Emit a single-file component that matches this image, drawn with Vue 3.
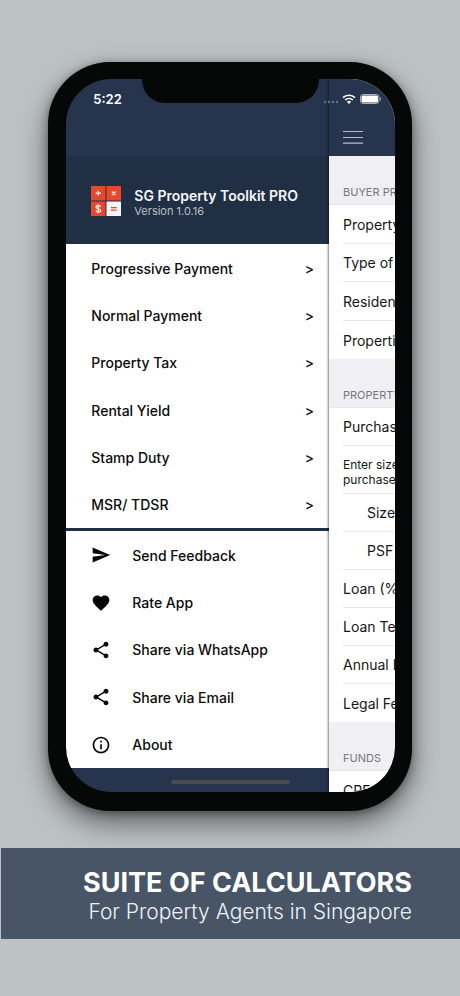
<script setup>
const pages = ['Progressive Payment', 'Normal Payment', 'Property Tax', 'Rental Yield', 'Stamp Duty', 'MSR/ TDSR']

const sharePath =
  'M18 16.08c-.76 0-1.44.3-1.96.77L8.91 12.7c.05-.23.09-.46.09-.7s-.04-.47-.09-.7l7.05-4.11c.54.5 1.25.81 2.04.81 1.66 0 3-1.34 3-3s-1.34-3-3-3-3 1.34-3 3c0 .24.04.47.09.7L8.04 9.81C7.5 9.31 6.79 9 6 9c-1.66 0-3 1.34-3 3s1.34 3 3 3c.79 0 1.5-.31 2.04-.81l7.12 4.16c-.05.21-.08.43-.08.65 0 1.61 1.31 2.92 2.92 2.92s2.92-1.31 2.92-2.92-1.31-2.92-2.92-2.92z'

const actions = [
  { label: 'Send Feedback', path: 'M2.01 21L23 12 2.01 3 2 10l15 2-15 2z' },
  {
    label: 'Rate App',
    path: 'M12 21.35l-1.45-1.32C5.4 15.36 2 12.28 2 8.5 2 5.42 4.42 3 7.5 3c1.74 0 3.41.81 4.5 2.09C13.09 3.81 14.76 3 16.5 3 19.58 3 22 5.42 22 8.5c0 3.78-3.4 6.86-8.55 11.54L12 21.35z',
  },
  { label: 'Share via WhatsApp', path: sharePath },
  { label: 'Share via Email', path: sharePath },
  {
    label: 'About',
    path: 'M11 17h2v-6h-2v6zm1-15C6.48 2 2 6.48 2 12s4.48 10 10 10 10-4.48 10-10S17.52 2 12 2zm0 18c-4.41 0-8-3.59-8-8s3.59-8 8-8 8 3.59 8 8-3.59 8-8 8zM11 9h2V7h-2v2z',
  },
]

const sections = [
  { title: 'BUYER PROFILE', rows: ['Property Count', 'Type of Buyer', 'Residency', 'Properties Owned'] },
  {
    title: 'PROPERTY DETAILS',
    rows: [
      'Purchase Price',
      { note: ['Enter size and PSF or', 'purchase price'] },
      { indent: 'Size' },
      { indent: 'PSF' },
      'Loan (%)',
      'Loan Tenure',
      'Annual Income',
      'Legal Fees',
    ],
  },
  { title: 'FUNDS', rows: ['CPF Balance'] },
]
</script>

<template>
  <div class="page">
    <div class="phone">
      <div class="screen">
        <aside class="drawer">
          <div class="drawer-top"></div>
          <header class="brand">
            <svg class="logo" viewBox="0 0 31 31" aria-hidden="true">
              <path class="tile" d="M0 0h15v15H0zM16 0h15v15H16zM0 16h15v15H0z" />
              <path class="tile-light" d="M16 16h15v15H16z" />
              <path class="mark" d="M7.5 4.8v5.4M4.8 7.5h5.4M21.6 5.6l3.8 3.8M25.4 5.6l-3.8 3.8" />
              <path class="mark" d="M9.9 21.6c-.5-1-1.3-1.4-2.4-1.4-1.4 0-2.3.6-2.3 1.6 0 2.4 4.8 1.1 4.8 3.5 0 1-1 1.6-2.4 1.6-1.3 0-2.2-.5-2.6-1.5M7.5 18.800v9.400" />
              <path class="mark-red" d="M20.500 22.300h6M20.500 25h6" />
            </svg>
            <div class="brand-text">
              <h1>SG Property Toolkit PRO</h1>
              <p>Version 1.0.16</p>
            </div>
          </header>
          <nav class="pages">
            <a v-for="page in pages" :key="page" href="#">
              <span>{{ page }}</span><span>&gt;</span>
            </a>
          </nav>
          <nav class="actions">
            <a v-for="action in actions" :key="action.label" href="#">
              <svg viewBox="0 0 24 24" aria-hidden="true"><path :d="action.path" /></svg>
              <span>{{ action.label }}</span>
            </a>
          </nav>
          <footer class="drawer-bottom"></footer>
        </aside>

        <main class="content">
          <div class="toolbar">
            <button type="button" aria-label="Menu">
              <svg viewBox="0 0 20 14" aria-hidden="true"><path d="M0 1.500h20M0 7.500h20M0 13.200h20" /></svg>
            </button>
          </div>
          <section v-for="section in sections" :key="section.title">
            <h2>{{ section.title }}</h2>
            <ul>
              <li
                v-for="(row, i) in section.rows"
                :key="i"
                :class="{ note: row.note, indent: row.indent }"
              >
                <template v-if="row.note">
                  <span v-for="line in row.note" :key="line">{{ line }}</span>
                </template>
                <span v-else>{{ row.indent || row }}</span>
              </li>
            </ul>
          </section>
        </main>

        <div class="status">
          <span class="time">5:22</span>
          <svg class="dots" viewBox="0 0 16 4" aria-hidden="true">
            <circle cx="2" cy="2" r="1.200" /><circle cx="6" cy="2" r="1.200" />
            <circle cx="10" cy="2" r="1.200" /><circle cx="14" cy="2" r="1.200" />
          </svg>
          <svg class="wifi" viewBox="0 0 14 10" aria-hidden="true">
            <path d="M1 3.700a8.600 8.600 0 0 1 12 0M3.200 6a5.500 5.500 0 0 1 7.600 0" />
            <path class="fill" d="M4.900 7.700a3 3 0 0 1 4.200 0L7 9.900z" />
          </svg>
          <svg class="battery" viewBox="0 0 22 10" aria-hidden="true">
            <rect class="shell" x=".5" y=".5" width="18.500" height="9" rx="2.500" />
            <rect class="level" x="1.500" y="1.500" width="16.500" height="7" rx="1.500" />
            <path class="tip" d="M20 3.300c1.500.5 1.500 2.900 0 3.400z" />
          </svg>
        </div>
        <div class="notch"></div>
        <div class="home"></div>
      </div>
    </div>

    <div class="banner">
      <strong>SUITE OF CALCULATORS</strong>
      <span>For Property Agents in Singapore</span>
    </div>
  </div>
</template>

<style>
body {
  margin: 0;
  background: #bdc2c5;
}
</style>

<style scoped>
.page {
  box-sizing: border-box;
  min-height: 100vh;
  padding-top: 62px;
  overflow: hidden;
  background: #bdc2c5;
  font-family: Inter, 'Liberation Sans', sans-serif;
}
h1, h2, p, ul {
  margin: 0;
  padding: 0;
  font-weight: 400;
}
a {
  color: inherit;
  text-decoration: none;
}
.phone {
  box-sizing: border-box;
  width: 79%;
  aspect-ratio: 363 / 748;
  margin: 0 auto;
  padding: 17px 17px 19px 18px;
  border-radius: 62px;
  background: #060707;
  box-shadow: 0 12px 28px rgba(0, 0, 0, 0.5), 0 2px 8px rgba(0, 0, 0, 0.35);
}
.screen {
  position: relative;
  display: flex;
  height: 100%;
  overflow: hidden;
  border-radius: 45px;
}
.drawer {
  display: flex;
  flex: 0 0 80%;
  flex-direction: column;
}
.drawer-top {
  height: 77px;
  background: #26354d;
}
.brand {
  display: flex;
  align-items: center;
  box-sizing: border-box;
  height: 88px;
  gap: 13px;
  padding: 2px 0 0 25px;
  background: #202f43;
  color: #f4f6f8;
  white-space: nowrap;
}
.brand-text {
  padding-top: 2px;
}
.brand h1 {
  font-size: 14px;
  font-weight: 600;
  line-height: 17px;
}
.brand p {
  color: #b9c0c9;
  font-size: 11px;
  line-height: 14px;
}
.logo {
  width: 30px;
  height: 30px;
}
.tile { fill: #e5482d; }
.tile-light { fill: #f5f3f5; }
.mark {
  fill: none;
  stroke: #fbe3da;
  stroke-width: 1.400;
}
.mark-red {
  stroke: #e5482d;
  stroke-width: 1.300;
}
.pages,
.actions {
  display: flex;
  flex-direction: column;
  background: #fff;
  color: #0b0b0b;
  font-size: 14px;
  font-weight: 500;
}
.pages {
  flex: 6 1 0;
}
.actions {
  flex: 5 1 0;
  border-top: 3px solid #202f43;
}
.pages a,
.actions a {
  display: flex;
  flex: 1;
  align-items: center;
  padding: 1px 15px 0 25px;
}
.pages a {
  justify-content: space-between;
}
.actions a {
  gap: 21px;
}
.actions svg {
  width: 20px;
  height: 20px;
  fill: #050505;
}
.drawer-bottom {
  height: 24px;
  background: #26354d;
}
.content {
  position: relative;
  flex: 1;
  min-width: 0;
  overflow: hidden;
  background: #efeff4;
  box-shadow: 0 0 3px rgba(0, 0, 0, 0.9);
  white-space: nowrap;
}
.toolbar {
  display: flex;
  align-items: flex-end;
  box-sizing: border-box;
  height: 77px;
  padding: 0 0 12px 14px;
  background: #26354d;
}
.toolbar button {
  display: flex;
  padding: 0;
  border: 0;
  background: none;
}
.toolbar svg {
  width: 20px;
  height: 14px;
  stroke: #b4bcc8;
  stroke-width: 1.200;
}
h2 {
  box-sizing: border-box;
  height: 49px;
  padding: 28px 0 0 14px;
  border-bottom: 1px solid #e6e6ea;
  color: #77777c;
  font-size: 11px;
  line-height: 16px;
}
ul {
  padding-left: 14px;
  background: #fff;
  list-style: none;
}
li {
  display: flex;
  flex-direction: column;
  justify-content: center;
  box-sizing: border-box;
  height: 38px;
  border-bottom: 1px solid #e9e9eb;
  color: #161616;
  font-size: 14px;
}
section:first-of-type li:nth-child(odd) {
  height: 39px;
}
li:last-child {
  border-bottom: 0;
}
li.note {
  height: 48px;
  padding-top: 4px;
  font-size: 12px;
  line-height: 15px;
}
li.indent span {
  padding-left: 24px;
}
.status {
  position: absolute;
  top: 11px;
  right: 13px;
  left: 27px;
  display: flex;
  align-items: center;
  height: 18px;
  color: #fff;
}
.time {
  margin-right: auto;
  font-size: 13px;
  font-weight: 600;
}
.dots {
  width: 16px;
  height: 4px;
  margin: 6px 3px 0 0;
  fill: #66738a;
}
.wifi {
  width: 14px;
  height: 10px;
  margin-right: 4px;
  fill: none;
  stroke: #fff;
  stroke-width: 1.700;
}
.wifi .fill {
  fill: #fff;
  stroke: none;
}
.battery {
  width: 22px;
  height: 10px;
}
.shell {
  fill: none;
  stroke: #a6aebb;
}
.level { fill: #fff; }
.tip { fill: #a6aebb; }
.notch {
  position: absolute;
  top: 0;
  left: 23%;
  width: 54%;
  height: 24px;
  border-radius: 0 0 23px 23px;
  background: #060707;
}
.home {
  position: absolute;
  bottom: 8px;
  left: 50%;
  width: 36%;
  height: 4px;
  border-radius: 2px;
  background: #4b4c4e;
  transform: translateX(-50%);
}
.banner {
  position: relative;
  display: flex;
  flex-direction: column;
  align-items: flex-end;
  box-sizing: border-box;
  margin: 37px 0 0 1px;
  padding: 19px 48px 14px 0;
  background: #475567;
  color: #fff;
  white-space: nowrap;
}
.banner strong {
  font-size: 27px;
  font-weight: 700;
  line-height: 32px;
}
.banner span {
  color: #eef3f9;
  font-size: 21px;
  font-weight: 300;
  line-height: 26px;
}
</style>
